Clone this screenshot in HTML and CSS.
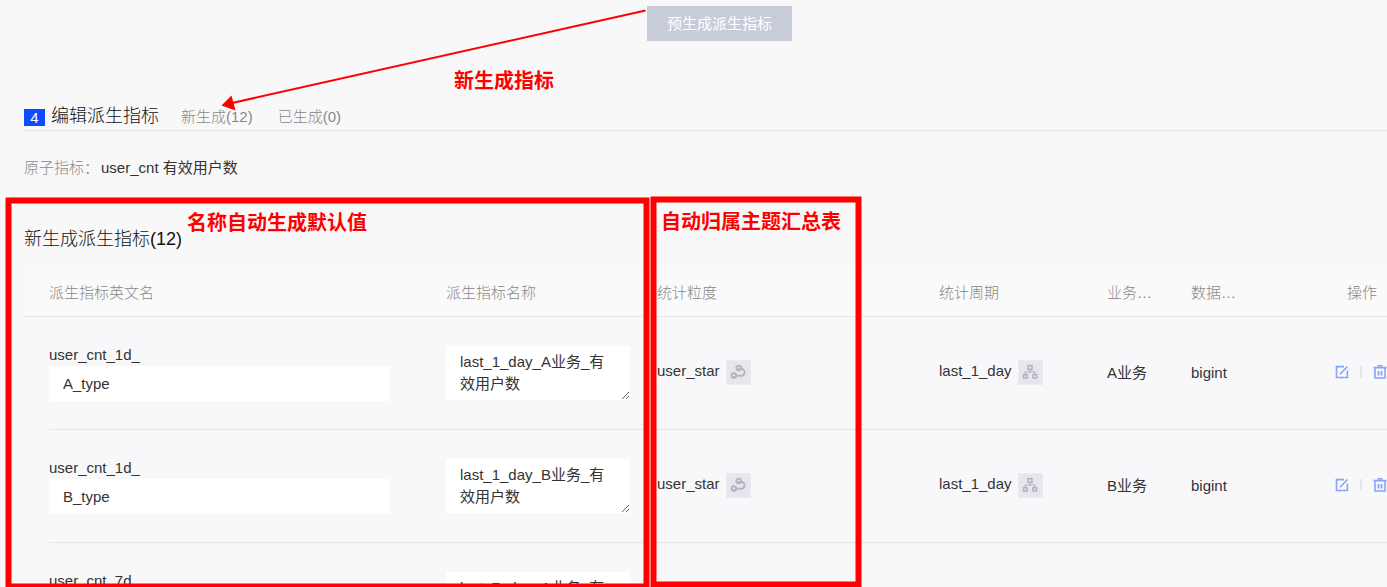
FILE: index.html
```html
<!DOCTYPE html>
<html lang="zh-CN">

<head>
    <meta charset="utf-8">
    <title>编辑派生指标</title>
    <link rel="stylesheet" href="styles.css">
</head>

<body>
<!-- shared icons -->
<svg class="sprite" aria-hidden="true">
    <symbol id="icon-link" viewBox="0 0 16 16">
        <g fill="none" stroke="#b4b5ba" stroke-width="1.9">
            <circle cx="8.7" cy="4" r="2.3"/>
            <circle cx="3.9" cy="11.6" r="2.3"/>
            <path d="M11 4.8C13.6 5 14.9 6.6 14.6 8.6C14.3 10.8 12.4 12 10 11.8L6 11.6"/>
            <path d="M8.7 4L8.5 7.2M3.9 12L3.7 14.5" stroke-width="1.4"/>
        </g>
    </symbol>
    <symbol id="icon-tree" viewBox="0 0 16 16">
        <g fill="none" stroke="#b1b2b6" stroke-width="1.5">
            <rect x="6" y="1.7" width="4" height="3.6"/>
            <rect x="1.5" y="10.7" width="3.6" height="3.3"/>
            <rect x="11" y="10.7" width="3.6" height="3.3"/>
            <path d="M8 5.3V8M3.3 10.7V8H12.8V10.7" stroke-width="1.2"/>
        </g>
    </symbol>
    <symbol id="icon-edit" viewBox="0 0 14 14">
        <path d="M9 1.6H1.5V12.5H12.4V5.5M5 9.3L12.4 1.5" fill="none" stroke="#84a4fb" stroke-width="1.6"/>
    </symbol>
    <symbol id="icon-trash" viewBox="0 0 14 14">
        <g fill="none" stroke="#84a4fb" stroke-width="1.6">
            <path d="M0.5 2.6H13.5M4.5 0.8H9.5M2 3V13H12V3"/>
            <path d="M5.5 6V10.5M8.5 6V10.5" stroke-width="1.8"/>
        </g>
    </symbol>
</svg>

<div class="page">
    <div class="toolbar">
        <button class="generate" type="button" disabled>预生成派生指标</button>
    </div>

    <div class="section-head">
        <span class="step">4</span>
        <h1 class="section-title">编辑派生指标</h1>
        <div class="tabs">
            <button class="tab" type="button">新生成(12)</button>
            <button class="tab" type="button">已生成(0)</button>
        </div>
    </div>

    <div class="atomic">
        <span class="atomic-label">原子指标：</span>
        <span>user_cnt 有效用户数</span>
    </div>

    <h2 class="table-title">新生成派生指标(12)</h2>

    <table class="metrics">
        <colgroup>
            <col class="col-gutter">
            <col>
            <col class="col-name">
            <col class="col-grain">
            <col class="col-period">
            <col class="col-biz">
            <col class="col-type">
            <col class="col-action">
        </colgroup>
        <thead>
        <tr>
            <th></th>
            <th>派生指标英文名</th>
            <th>派生指标名称</th>
            <th>统计粒度</th>
            <th>统计周期</th>
            <th>业务…</th>
            <th>数据…</th>
            <th class="action-head">操作</th>
        </tr>
        </thead>
        <tbody>
        <tr>
            <td></td>
            <td class="cell-en">
                <label class="prefix" for="en1">user_cnt_1d_</label>
                <input class="en-input" id="en1" type="text" value="A_type">
            </td>
            <td><textarea class="name-input" aria-label="派生指标名称">last_1_day_A业务_有效用户数</textarea></td>
            <td class="cell-tools">
                <div class="pick">
                    <span class="pick-text">user_star</span>
                    <button class="chip" type="button" aria-label="统计粒度"><svg class="chip-icon"><use href="#icon-link"/></svg></button>
                </div>
            </td>
            <td class="cell-tools">
                <div class="pick">
                    <span class="pick-text">last_1_day</span>
                    <button class="chip" type="button" aria-label="统计周期"><svg class="chip-icon"><use href="#icon-tree"/></svg></button>
                </div>
            </td>
            <td>A业务</td>
            <td>bigint</td>
            <td class="cell-tools">
                <div class="actions">
                    <button class="icon-btn" type="button" aria-label="编辑"><svg class="action-icon"><use href="#icon-edit"/></svg></button>
                    <span class="divider"></span>
                    <button class="icon-btn" type="button" aria-label="删除"><svg class="action-icon"><use href="#icon-trash"/></svg></button>
                </div>
            </td>
        </tr>
        <tr>
            <td></td>
            <td class="cell-en">
                <label class="prefix" for="en2">user_cnt_1d_</label>
                <input class="en-input" id="en2" type="text" value="B_type">
            </td>
            <td><textarea class="name-input" aria-label="派生指标名称">last_1_day_B业务_有效用户数</textarea></td>
            <td class="cell-tools">
                <div class="pick">
                    <span class="pick-text">user_star</span>
                    <button class="chip" type="button" aria-label="统计粒度"><svg class="chip-icon"><use href="#icon-link"/></svg></button>
                </div>
            </td>
            <td class="cell-tools">
                <div class="pick">
                    <span class="pick-text">last_1_day</span>
                    <button class="chip" type="button" aria-label="统计周期"><svg class="chip-icon"><use href="#icon-tree"/></svg></button>
                </div>
            </td>
            <td>B业务</td>
            <td>bigint</td>
            <td class="cell-tools">
                <div class="actions">
                    <button class="icon-btn" type="button" aria-label="编辑"><svg class="action-icon"><use href="#icon-edit"/></svg></button>
                    <span class="divider"></span>
                    <button class="icon-btn" type="button" aria-label="删除"><svg class="action-icon"><use href="#icon-trash"/></svg></button>
                </div>
            </td>
        </tr>
        <tr>
            <td></td>
            <td class="cell-en">
                <label class="prefix" for="en3">user_cnt_7d_</label>
                <input class="en-input" id="en3" type="text" value="A_type">
            </td>
            <td><textarea class="name-input" aria-label="派生指标名称">last_7_day_A业务_有效用户数</textarea></td>
            <td></td>
            <td></td>
            <td></td>
            <td></td>
            <td></td>
        </tr>
        </tbody>
    </table>
</div>

<!-- red notes drawn over the page -->
<svg class="marks" aria-hidden="true">
    <g fill="none" stroke="#f00" stroke-width="6">
        <rect x="8.5" y="200.5" width="638" height="386"/>
        <rect x="653.5" y="199.5" width="205" height="385"/>
    </g>
    <path d="M645.5 10.5L232 103" stroke="#f00" stroke-width="2"/>
    <path d="M221.5 105.5L231.5 95.5L235.5 110.5Z" fill="#f00"/>
</svg>
<span class="note note-new">新生成指标</span>
<span class="note note-name">名称自动生成默认值</span>
<span class="note note-topic">自动归属主题汇总表</span>
</body>

</html>
```

FILE: styles.css
```css
* {
    box-sizing: border-box;
}

body {
    position: relative;
    height: 100vh;
    margin: 0;
    overflow: hidden;
    background: #f8f8f8;
    color: #333;
    font-family: "Liberation Sans", "Noto Sans CJK SC", sans-serif;
    font-size: 15px;
    line-height: 22px;
}

button, input, textarea {
    margin: 0;
    border: 0;
    border-radius: 0;
    color: inherit;
    font: inherit;
}

.sprite {
    display: none;
}

.page {
    height: 100%;
    padding-left: 24px;
    overflow: hidden;
}

/* top */
.toolbar {
    display: flex;
    justify-content: center;
    padding: 6px 0 0 28px;
}
.generate {
    height: 35px;
    padding: 0 20px;
    background: #c8ccd8;
    color: #fff;
}

.section-head {
    display: flex;
    align-items: flex-end;
    height: 28px;
    margin-top: 62px;
    border-bottom: 1px solid #e6e6e6;
}
.step {
    width: 21px;
    height: 17px;
    margin-bottom: 4px;
    background: #0d4bff;
    color: #fff;
    line-height: 17px;
    text-align: center;
}
.section-title {
    margin: 0 0 0 6px;
    color: #111;
    font-size: 18px;
    font-weight: 300;
    line-height: 28px;
}
.tabs {
    display: flex;
    gap: 25px;
    margin: 0 0 2px 22px;
}
.tab {
    padding: 0;
    background: none;
    color: #888;
    font-weight: 300;
}

.atomic {
    display: flex;
    gap: 2px;
    margin-top: 26px;
}
.atomic-label {
    color: #888;
    font-weight: 300;
}

.table-title {
    margin: 48px 0 20px;
    color: #111;
    font-size: 18px;
    font-weight: 300;
    line-height: 24px;
}

/* table */
.metrics {
    width: 100%;
    border-spacing: 0;
    table-layout: fixed;
}
.col-gutter {
    width: 25px;
}
.col-name {
    width: 211px;
}
.col-grain {
    width: 282px;
}
.col-period {
    width: 168px;
}
.col-biz {
    width: 84px;
}
.col-type {
    width: 144px;
}
.col-action {
    width: 52px;
}
.metrics th {
    height: 46px;
    padding: 0 0 2px;
    border-bottom: 1px solid #e6e6e6;
    background: #fafafa;
    color: #888;
    font-weight: 300;
    text-align: left;
}
.metrics .action-head {
    padding-left: 12px;
}
.metrics td {
    height: 113px;
    padding: 0;
    border-bottom: 1px solid #e6e6e9;
    background: #f8f8fb;
}
.metrics td:first-child {
    border-bottom-color: transparent;
}
.metrics .cell-en {
    padding: 0 56px 2px 0;
}
.metrics .cell-tools {
    padding-bottom: 2px;
}
.prefix {
    display: block;
}
.en-input {
    display: block;
    width: 100%;
    height: 35px;
    padding: 0 14px;
    background: #fff;
}
.name-input {
    display: block;
    width: 184px;
    height: 54px;
    padding: 5px 14px;
    background: #fff;
    overflow: hidden;
    resize: both;
}

.pick {
    display: flex;
    align-items: center;
    gap: 6px;
}
.pick-text {
    padding-bottom: 3px;
}
.chip {
    display: flex;
    align-items: center;
    justify-content: center;
    width: 25px;
    height: 25px;
    padding: 0;
    border: 1px solid #ebebed;
    background: #e6e7ee;
}
.chip-icon {
    width: 16px;
    height: 16px;
}

.actions {
    display: flex;
    align-items: center;
}
.icon-btn {
    display: flex;
    padding: 0;
    background: none;
}
.action-icon {
    width: 14px;
    height: 14px;
}
.divider {
    width: 2px;
    height: 12px;
    margin: 0 11px;
    background: #e6e6e8;
}

/* notes */
.marks {
    position: absolute;
    top: 0;
    left: 0;
    width: 100%;
    height: 100%;
    pointer-events: none;
}
.note {
    position: absolute;
    color: #f00;
    font-size: 20px;
    font-weight: 700;
    line-height: 28px;
    white-space: nowrap;
}
.note-new {
    top: 67px;
    left: 454px;
}
.note-name {
    top: 209px;
    left: 187px;
}
.note-topic {
    top: 208px;
    left: 661px;
}
```
